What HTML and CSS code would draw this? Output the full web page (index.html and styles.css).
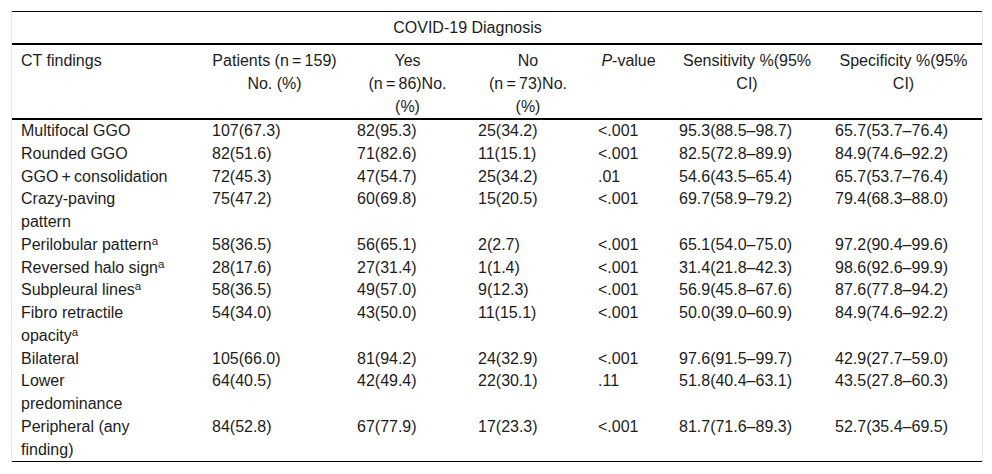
FILE: index.html
```html
<!DOCTYPE html>
<html lang="en">
<head>
<meta charset="utf-8">
<title>CT findings table</title>
<link rel="stylesheet" href="styles.css">
</head>
<body>
<div class="wrap">
<table class="tbl">
<colgroup>
<col class="w1"><col class="w2"><col class="w3"><col class="w4"><col class="w5"><col class="w6"><col class="w7">
</colgroup>
<thead>
<tr class="r-title">
<th></th><th></th><th colspan="2">COVID-19 Diagnosis</th><th></th><th></th><th></th>
</tr>
<tr class="r-head">
<th class="lft">CT findings</th>
<th>Patients (n&#8201;=&#8201;159)<br>No. (%)</th>
<th>Yes<br>(n&#8201;=&#8201;86)No.<br>(%)</th>
<th>No<br>(n&#8201;=&#8201;73)No.<br>(%)</th>
<th><i>P</i>-value</th>
<th>Sensitivity %(95%<br>CI)</th>
<th>Specificity %(95%<br>CI)</th>
</tr>
</thead>
<tbody>
<tr><td>Multifocal GGO</td><td>107(67.3)</td><td>82(95.3)</td><td>25(34.2)</td><td>&lt;.001</td><td>95.3(88.5–98.7)</td><td>65.7(53.7–76.4)</td></tr>
<tr><td>Rounded GGO</td><td>82(51.6)</td><td>71(82.6)</td><td>11(15.1)</td><td>&lt;.001</td><td>82.5(72.8–89.9)</td><td>84.9(74.6–92.2)</td></tr>
<tr><td>GGO&#8201;+&#8201;consolidation</td><td>72(45.3)</td><td>47(54.7)</td><td>25(34.2)</td><td>.01</td><td>54.6(43.5–65.4)</td><td>65.7(53.7–76.4)</td></tr>
<tr><td>Crazy-paving<br>pattern</td><td>75(47.2)</td><td>60(69.8)</td><td>15(20.5)</td><td>&lt;.001</td><td>69.7(58.9–79.2)</td><td>79.4(68.3–88.0)</td></tr>
<tr><td>Perilobular pattern<sup>a</sup></td><td>58(36.5)</td><td>56(65.1)</td><td>2(2.7)</td><td>&lt;.001</td><td>65.1(54.0–75.0)</td><td>97.2(90.4–99.6)</td></tr>
<tr><td>Reversed halo sign<sup>a</sup></td><td>28(17.6)</td><td>27(31.4)</td><td>1(1.4)</td><td>&lt;.001</td><td>31.4(21.8–42.3)</td><td>98.6(92.6–99.9)</td></tr>
<tr><td>Subpleural lines<sup>a</sup></td><td>58(36.5)</td><td>49(57.0)</td><td>9(12.3)</td><td>&lt;.001</td><td>56.9(45.8–67.6)</td><td>87.6(77.8–94.2)</td></tr>
<tr><td>Fibro retractile<br>opacity<sup>a</sup></td><td>54(34.0)</td><td>43(50.0)</td><td>11(15.1)</td><td>&lt;.001</td><td>50.0(39.0–60.9)</td><td>84.9(74.6–92.2)</td></tr>
<tr><td>Bilateral</td><td>105(66.0)</td><td>81(94.2)</td><td>24(32.9)</td><td>&lt;.001</td><td>97.6(91.5–99.7)</td><td>42.9(27.7–59.0)</td></tr>
<tr><td>Lower<br>predominance</td><td>64(40.5)</td><td>42(49.4)</td><td>22(30.1)</td><td>.11</td><td>51.8(40.4–63.1)</td><td>43.5(27.8–60.3)</td></tr>
<tr><td>Peripheral (any<br>finding)</td><td>84(52.8)</td><td>67(77.9)</td><td>17(23.3)</td><td>&lt;.001</td><td>81.7(71.6–89.3)</td><td>52.7(35.4–69.5)</td></tr>
</tbody>
</table>
</div>
</body>
</html>
```
FILE: styles.css
```css
html, body {
  margin: 0;
  padding: 0;
  background: #ffffff;
}

body {
  font-family: "Liberation Sans", Arial, sans-serif;
  font-size: 16px;
  color: #1c1c1c;
}

.wrap {
  margin: 11px 0 0 11px;
  width: 970px;
  border-left: 1px solid #e8e8e8;
  border-right: 1px solid #e8e8e8;
}

.tbl {
  width: 970px;
  table-layout: fixed;
  border-collapse: separate;
  border-spacing: 0;
  border-top: 1px solid #000;
  border-bottom: 1px solid #000;
}

.w1 { width: 190px; }
.w2 { width: 145px; }
.w3 { width: 121px; }
.w4 { width: 120px; }
.w5 { width: 81px; }
.w6 { width: 156px; }
.w7 { width: 157px; }

.tbl th,
.tbl td {
  padding: 0 10px;
  line-height: 22.75px;
  vertical-align: top;
  text-align: left;
}

.tbl th {
  font-weight: normal;
  text-align: center;
  border-bottom: 2px solid #000;
}

.tbl th:first-child,
.tbl td:first-child {
  padding-left: 9px;
}

.tbl th.lft {
  text-align: left;
}

.r-title th {
  padding-top: 4px;
  padding-bottom: 4px;
  line-height: 23px;
}

.r-head th {
  padding-top: 4px;
  padding-bottom: 0;
  line-height: 23px;
}

.tbl sup {
  font-size: 0.72em;
  line-height: 0;
  vertical-align: 0.45em;
}
```
